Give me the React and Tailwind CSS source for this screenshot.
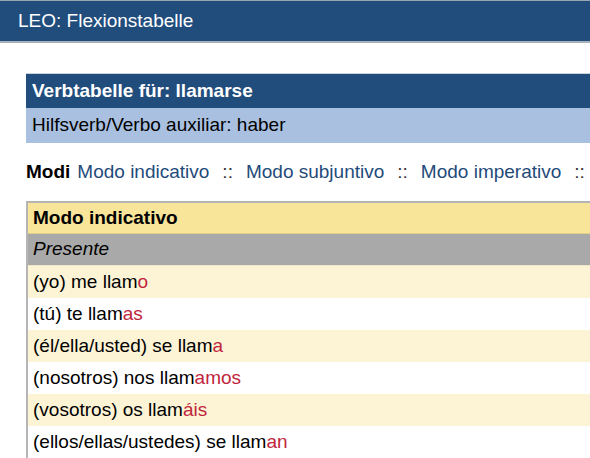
const ROWS = [
  ['(yo) me llam', 'o'],
  ['(tú) te llam', 'as'],
  ['(él/ella/usted) se llam', 'a'],
  ['(nosotros) nos llam', 'amos'],
  ['(vosotros) os llam', 'áis'],
  ['(ellos/ellas/ustedes) se llam', 'an'],
]

const MODES = ['Modo indicativo', 'Modo subjuntivo', 'Modo imperativo']

export default function App() {
  return (
    <div className="w-[590px] h-[458px] overflow-hidden bg-white font-['Liberation_Sans',Arial,sans-serif] text-[19px] text-black">
      {/* Top bar */}
      <div className="h-[43px] bg-[#214d7d] border-t border-[#9aa5b3] border-b-2 border-b-[#a8b0b8] flex items-center pl-[18px]">
        <span className="text-white text-[19px]">LEO: Flexionstabelle</span>
      </div>

      <div className="pl-[26px] pt-[30px]">
        {/* Verb info */}
        <div className="w-[600px]">
          <div className="h-[35px] bg-[#214d7d] border-t border-[#c9d3de] flex items-center pl-[6px] text-white font-bold">
            Verbtabelle für: llamarse
          </div>
          <div className="h-[35px] bg-[#a9c0e0] flex items-center pl-[6px]">
            Hilfsverb/Verbo auxiliar: haber
          </div>
        </div>

        {/* Modes nav */}
        <div className="h-[58px] flex items-center whitespace-nowrap">
          <span className="font-bold mr-[7px]">Modi</span>
          {MODES.map((m) => (
            <span key={m} className="flex items-center">
              <span className="text-[#1f4b7a]">{m}</span>
              <span className="mx-[13px] text-[#333]">::</span>
            </span>
          ))}
        </div>

        {/* Conjugation table */}
        <div className="w-[600px] border-2 border-[#b5b5b5]">
          <div className="h-[31px] bg-[#f8e59a] border-b border-[#e2d088] flex items-center pl-[5px] font-bold">
            Modo indicativo
          </div>
          <div className="h-[32px] bg-[#a9a9a9] border-b border-[#efe6c6] flex items-center pl-[5px] italic">
            Presente
          </div>
          {ROWS.map(([stem, end], i) => (
            <div
              key={stem}
              className={`h-[32px] flex items-center pl-[5px] ${i % 2 === 0 ? 'bg-[#fdf4d6]' : 'bg-white'}`}
            >
              {stem}
              <span className="text-[#c0263c]">{end}</span>
            </div>
          ))}
        </div>
      </div>
    </div>
  )
}
